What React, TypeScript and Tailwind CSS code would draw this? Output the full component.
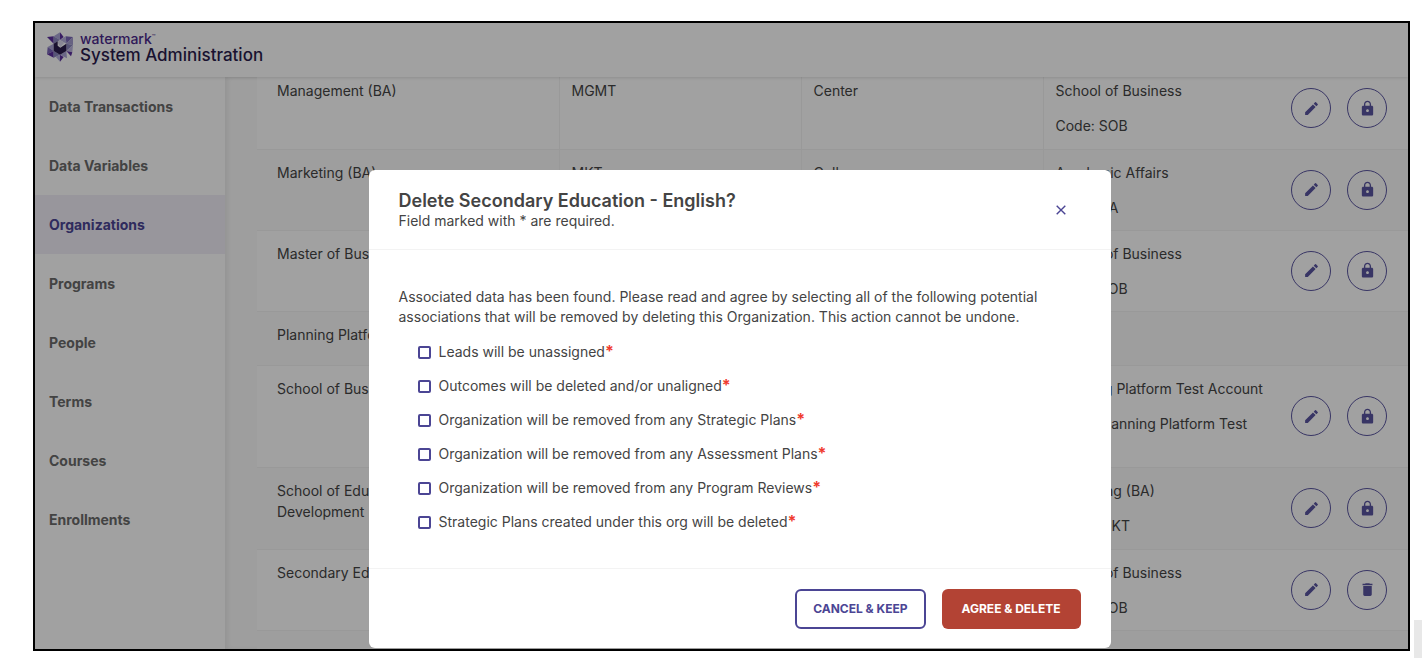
import React from 'react';
import { MdDelete, MdEdit, MdLock } from 'react-icons/md';

interface Org {
  name: string;
  code?: string;
  type?: string;
  parent?: string;
  parentCode?: string;
  action?: 'lock' | 'delete';
}

const NAV = ['Data Transactions', 'Data Variables', 'Organizations', 'Programs', 'People', 'Terms', 'Courses', 'Enrollments'];

const ORGS: Org[] = [
  { name: 'Management (BA)', code: 'MGMT', type: 'Center', parent: 'School of Business', parentCode: 'SOB', action: 'lock' },
  { name: 'Marketing (BA)', code: 'MKT', type: 'College', parent: 'Academic Affairs', parentCode: 'AA', action: 'lock' },
  { name: 'Master of Business', parent: 'School of Business', parentCode: 'SOB', action: 'lock' },
  { name: 'Planning Platform' },
  { name: 'School of Business', parent: 'Planning Platform Test Account', parentCode: 'Planning Platform Test Account', action: 'lock' },
  { name: 'School of Education and Human Development', parent: 'Marketing (BA)', parentCode: 'MKT', action: 'lock' },
  { name: 'Secondary Education', parent: 'School of Business', parentCode: 'SOB', action: 'delete' },
];

const ASSOCIATIONS = [
  'Leads will be unassigned',
  'Outcomes will be deleted and/or unaligned',
  'Organization will be removed from any Strategic Plans',
  'Organization will be removed from any Assessment Plans',
  'Organization will be removed from any Program Reviews',
  'Strategic Plans created under this org will be deleted',
];

function Logo() {
  return (
    <svg className="h-[30px] w-[26px]" viewBox="0 0 78 88" aria-hidden="true">
      <path d="M39 0V23L20 12Z" fill="#aaa4d6" />
      <path d="M39 0L50 14L39 23Z" fill="#5b2f9e" />
      <path d="M0 14L20 12V34Z" fill="#5b2f9e" />
      <path d="M20 12L39 23L20 34Z" fill="#8a86bd" />
      <path d="M56 12L78 14L58 34Z" fill="#7a68b8" />
      <path d="M56 12L58 34L39 23Z" fill="#b3aedb" />
      <path d="M58 34L78 14V38Z" fill="#a39ccf" />
      <path d="M20 34V56L2 44Z" fill="#aaa4d6" />
      <path d="M58 34L78 38L58 56Z" fill="#8a86bd" />
      <path d="M78 38L76 60L58 56Z" fill="#b9b4dc" />
      <path d="M2 44L20 56L0 66Z" fill="#7a68b8" />
      <path d="M0 66L20 56L20 76Z" fill="#5b2f9e" />
      <path d="M58 56L76 60L72 72Z" fill="#5b2f9e" />
      <path d="M20 56L39 67L20 76Z" fill="#8a86bd" />
      <path d="M39 67V88L26 73Z" fill="#b3aedb" />
      <path d="M39 67L50 74L39 88Z" fill="#5b2f9e" />
      <path d="M58 56L60 78L39 67Z" fill="#aaa4d6" />
      <path d="M39 23L52 31L40 45L31 28Z" fill="#d9d6ec" />
      <path d="M20 34L32 27V40L40 46L58 34V56L39 67L20 56Z" fill="#2a1c4d" />
    </svg>
  );
}

function RoundButton({ label, children }: { label: string; children: React.ReactNode }) {
  return (
    <button aria-label={label} className="flex size-10 items-center justify-center rounded-full border border-[#5a55a0] text-[#5a55a0]">
      {children}
    </button>
  );
}

function OrgRow({ org }: { org: Org }) {
  return (
    <tr className="h-[81px] border-b border-[#f3f3f3] align-top even:bg-[#fafafa] nth-4:h-[54px] nth-5:h-[102px] nth-6:h-[82px]">
      <td className="border-r border-[#f3f3f3] py-3 pr-3 pl-5">{org.name}</td>
      <td className="border-r border-[#f3f3f3] p-3">{org.code}</td>
      <td className="border-r border-[#f3f3f3] p-3">{org.type}</td>
      <td className="p-3 pr-2">
        {org.parent && <p>{org.parent}</p>}
        {org.parentCode && <p className="mt-[14px]">Code: {org.parentCode}</p>}
      </td>
      <td className="pr-[21px] align-middle">
        {org.action && (
          <div className="flex justify-end gap-4">
            <RoundButton label={`Edit ${org.name}`}>
              <MdEdit size={17} />
            </RoundButton>
            <RoundButton label={`${org.action === 'lock' ? 'Lock' : 'Delete'} ${org.name}`}>
              {org.action === 'lock' ? <MdLock size={17} /> : <MdDelete size={17} />}
            </RoundButton>
          </div>
        )}
      </td>
    </tr>
  );
}

function DeleteDialog() {
  return (
    <div role="dialog" aria-labelledby="dialog-title" className="w-[742px] rounded-md bg-white">
      <header className="flex h-20 items-center justify-between border-b border-[#f3f3f3] px-[30px]">
        <div className="pt-[2px]">
          <h2 id="dialog-title" className="text-lg leading-5 font-semibold">Delete Secondary Education - English?</h2>
          <p className="leading-5">Field marked with * are required.</p>
        </div>
        <button aria-label="Close" className="flex size-10 items-center justify-center text-[#4b4594]">
          <svg className="size-[10px]" viewBox="0 0 10 10" fill="none" stroke="currentColor" strokeWidth="1.4">
            <path d="M0.7 0.7L9.3 9.3M9.3 0.7L0.7 9.3" />
          </svg>
        </button>
      </header>

      <div className="px-[30px] pt-[37px] pb-9">
        <p className="leading-5">
          Associated data has been found. Please read and agree by selecting all of the following potential associations that will be removed by deleting this Organization. This action cannot be undone.
        </p>
        <div className="mt-[15px] flex flex-col gap-[14px] pl-[19px]">
          {ASSOCIATIONS.map((text) => (
            <label key={text} className="flex items-center gap-2 leading-5">
              <input type="checkbox" className="size-[13px] appearance-none rounded-xs border-2 border-[#4b4594] checked:bg-[#4b4594]" />
              <span>
                {text}
                <span className="text-base leading-none font-bold text-[#f03a2e]">*</span>
              </span>
            </label>
          ))}
        </div>
      </div>

      <footer className="flex h-20 items-center justify-end gap-4 border-t border-[#f3f3f3] px-[30px] text-xs font-bold">
        <button className="h-10 rounded-md border-2 border-[#4b4594] px-4 text-[#4b4594]">CANCEL &amp; KEEP</button>
        <button className="h-10 rounded-md bg-[#b34334] px-5 text-white">AGREE &amp; DELETE</button>
      </footer>
    </div>
  );
}

export default function App() {
  return (
    <div className="relative flex h-screen bg-white pt-[21px] pr-3 pb-[13px] pl-[33px] font-[Inter,sans-serif] text-sm text-[#444]">
      <div className="relative flex flex-1 flex-col overflow-hidden border-2 border-black">
        <header className="relative z-10 flex h-[54px] shrink-0 items-center gap-[7px] bg-white px-3 pb-[6px] shadow-[0_1px_3px_rgba(0,0,0,0.12)]">
          <Logo />
          <div>
            <p className="flex items-start text-sm leading-4 font-medium text-[#4b2a8c]">
              watermark<span className="text-[6px] leading-3">™</span>
            </p>
            <h1 className="text-[17px] leading-4 font-medium text-[#2a1c4d]">System Administration</h1>
          </div>
        </header>

        <div className="flex min-h-0 flex-1">
          <nav className="w-[190px] shrink-0 bg-white">
            {NAV.map((item) => (
              <a
                key={item}
                href="#"
                aria-current={item === 'Organizations' ? 'page' : undefined}
                className="flex h-[59px] items-center px-[14px] font-bold text-[#6b6b6b] aria-[current=page]:bg-[#f1eef8] aria-[current=page]:text-[#4b4594]"
              >
                {item}
              </a>
            ))}
          </nav>

          <main className="flex-1 overflow-hidden bg-[#fafafa] pl-8 shadow-[inset_3px_0_4px_rgba(0,0,0,0.06)]">
            <table className="-mt-[9px] w-full table-fixed border-collapse bg-white leading-[21px]">
              <colgroup>
                <col className="w-[302px]" />
                <col className="w-[242px]" />
                <col className="w-[242px]" />
                <col className="w-[228px]" />
                <col />
              </colgroup>
              <tbody>
                {ORGS.map((org) => (
                  <OrgRow key={org.name} org={org} />
                ))}
                <tr className="h-[81px] bg-[#fafafa]">
                  <td colSpan={5} />
                </tr>
              </tbody>
            </table>
          </main>
        </div>

        <div className="absolute inset-0 z-20 flex items-end justify-center bg-black/37 pb-px pl-9">
          <DeleteDialog />
        </div>
      </div>

      {/* page scroll thumb */}
      <div className="absolute right-0 bottom-[6px] h-[38px] w-2 bg-[#e8e8e8]" />
    </div>
  );
}
